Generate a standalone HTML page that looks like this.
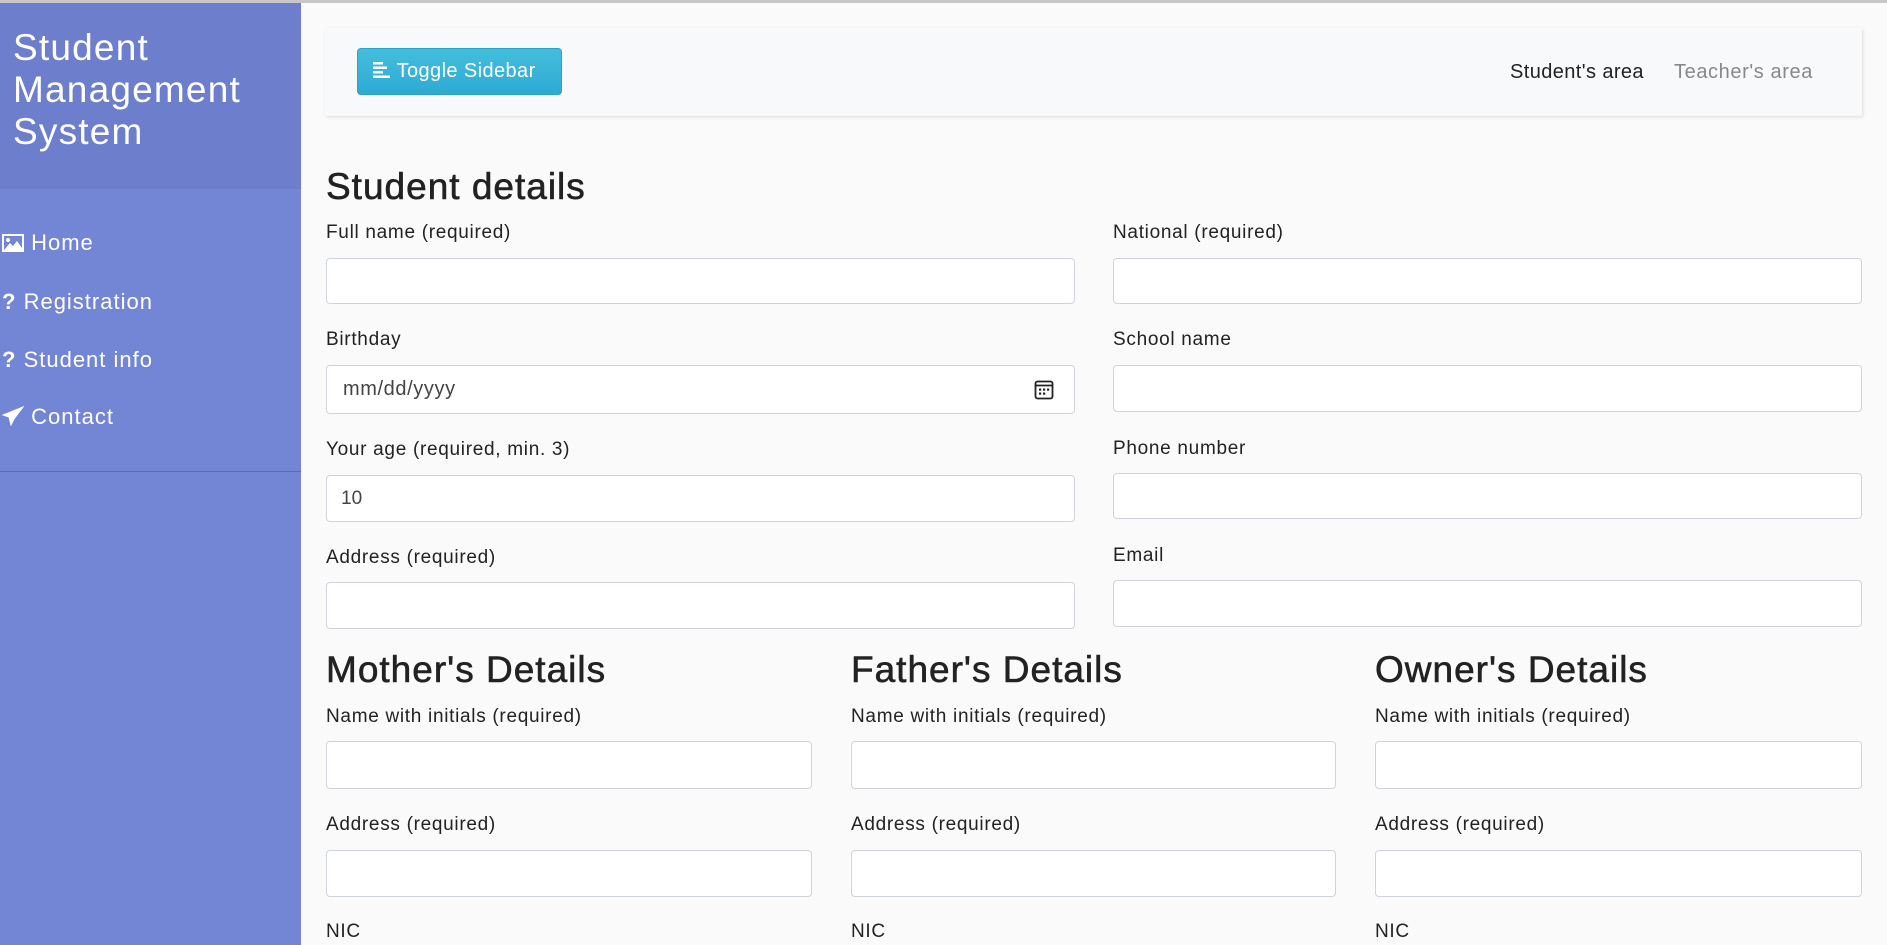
<!DOCTYPE html>
<html><head><meta charset="utf-8"><style>
*{box-sizing:border-box;margin:0;padding:0}
body{width:1887px;height:945px;overflow:hidden;background:#fafafa;font-family:"Liberation Sans",sans-serif;color:#212529;position:relative}
.topline{position:absolute;left:0;top:0;width:1887px;height:3px;background:#c8c8c8}
.side{position:absolute;left:0;top:3px;width:301px;height:942px;background:#7386d5}
.sidehead{position:absolute;left:0;top:3px;width:301px;height:186px;background:#6d7fcc}
.title{position:absolute;left:13px;top:27px;color:#fff;font-size:37px;line-height:42px;letter-spacing:1.2px}
.nav{position:absolute;left:2px;color:#fff;font-size:22px;line-height:28px;white-space:nowrap;letter-spacing:1px}
.divider{position:absolute;left:0;top:471px;width:301px;height:1px;background:#5a6ab0}
.card{position:absolute;left:325px;top:28px;width:1537px;height:88px;background:#f8f9fa;box-shadow:1px 1px 3px rgba(0,0,0,.12)}
.btn{position:absolute;left:357px;top:48px;width:205px;height:47px;border-radius:4px;background:linear-gradient(#45bedc,#2eaad4);border:1px solid #2aa3c7;color:#fff;font-size:20px;line-height:45px;padding-left:15px;letter-spacing:0.4px;white-space:nowrap}
.t{position:absolute;white-space:nowrap}
.h{font-size:37px;line-height:42px;color:#222;letter-spacing:1px;-webkit-text-stroke:0.6px #222}
.l{font-size:19px;line-height:24px;color:#222;letter-spacing:0.7px}
.in{position:absolute;background:#fff;border:1px solid #ced4da;border-radius:4px}
</style></head><body>
<div class="topline"></div>
<div class="side"></div>
<div class="sidehead"></div>
<div class="title">Student<br>Management<br>System</div>
<div class="nav" style="top:229px"><svg width="22" height="18" viewBox="0 0 22 18" style="vertical-align:-2px"><rect x="1" y="1" width="20" height="16" fill="none" stroke="#fff" stroke-width="2"/><circle cx="6" cy="6" r="2" fill="#fff"/><path d="M2 16 L8 9 L11 12 L15 7 L20 14 L20 16Z" fill="#fff"/></svg> Home</div>
<div class="nav" style="top:288px"><b>?</b> Registration</div>
<div class="nav" style="top:346px"><b>?</b> Student info</div>
<div class="nav" style="top:403px"><svg width="22" height="20" viewBox="0 0 22 20" style="vertical-align:-2px"><path d="M21 1 L1 9 L7 11 L9 19 L12 13 Z" fill="#fff" stroke="#fff" stroke-width="1"/></svg> Contact</div>
<div class="divider"></div>

<div class="card"></div>
<div class="btn"><svg width="18" height="18" viewBox="0 0 18 18" style="vertical-align:-2px"><rect x="0" y="1" width="10" height="2.5" fill="#fff"/><rect x="0" y="5.5" width="14" height="2.5" fill="#fff"/><rect x="0" y="10" width="10" height="2.5" fill="#fff"/><rect x="0" y="14.5" width="17" height="2.5" fill="#fff"/></svg> Toggle Sidebar</div>
<div class="t" style="left:1510px;top:60px;font-size:20px;line-height:24px;color:#222;letter-spacing:0.4px">Student's area</div>
<div class="t" style="left:1674px;top:60px;font-size:20px;line-height:24px;color:#888;letter-spacing:0.6px">Teacher's area</div>

<div class="t h" style="left:326px;top:166px">Student details</div>

<div class="t l" style="left:326px;top:221px">Full name (required)</div>
<div class="in" style="left:326px;top:258px;width:749px;height:46px"></div>
<div class="t l" style="left:326px;top:328px">Birthday</div>
<div class="in" style="left:326px;top:365px;width:749px;height:49px"><span style="position:absolute;left:16px;top:12px;font-size:20px;color:#444;letter-spacing:0.6px">mm/dd/yyyy</span><svg style="position:absolute;right:20px;top:14px" width="20" height="20" viewBox="0 0 20 20"><rect x="1.5" y="1.5" width="17" height="17" rx="2" fill="none" stroke="#222" stroke-width="1.8"/><line x1="1.5" y1="5.5" x2="18.5" y2="5.5" stroke="#222" stroke-width="1.8"/><g fill="#222"><rect x="5" y="8.5" width="2.2" height="2.2"/><rect x="9" y="8.5" width="2.2" height="2.2"/><rect x="13" y="8.5" width="2.2" height="2.2"/><rect x="5" y="12.5" width="2.2" height="2.2"/><rect x="9" y="12.5" width="2.2" height="2.2"/></g></svg></div>
<div class="t l" style="left:326px;top:438px">Your age (required, min. 3)</div>
<div class="in" style="left:326px;top:475px;width:749px;height:47px"><span style="position:absolute;left:14px;top:12px;font-size:19px;color:#444">10</span></div>
<div class="t l" style="left:326px;top:546px">Address (required)</div>
<div class="in" style="left:326px;top:582px;width:749px;height:47px"></div>

<div class="t l" style="left:1113px;top:221px">National (required)</div>
<div class="in" style="left:1113px;top:258px;width:749px;height:46px"></div>
<div class="t l" style="left:1113px;top:328px">School name</div>
<div class="in" style="left:1113px;top:365px;width:749px;height:47px"></div>
<div class="t l" style="left:1113px;top:437px">Phone number</div>
<div class="in" style="left:1113px;top:473px;width:749px;height:46px"></div>
<div class="t l" style="left:1113px;top:544px">Email</div>
<div class="in" style="left:1113px;top:580px;width:749px;height:47px"></div>

<div class="t h" style="left:326px;top:649px">Mother's Details</div>
<div class="t h" style="left:851px;top:649px">Father's Details</div>
<div class="t h" style="left:1375px;top:649px">Owner's Details</div>

<div class="t l" style="left:326px;top:705px">Name with initials (required)</div>
<div class="t l" style="left:851px;top:705px">Name with initials (required)</div>
<div class="t l" style="left:1375px;top:705px">Name with initials (required)</div>
<div class="in" style="left:326px;top:741px;width:486px;height:48px"></div>
<div class="in" style="left:851px;top:741px;width:485px;height:48px"></div>
<div class="in" style="left:1375px;top:741px;width:487px;height:48px"></div>

<div class="t l" style="left:326px;top:813px">Address (required)</div>
<div class="t l" style="left:851px;top:813px">Address (required)</div>
<div class="t l" style="left:1375px;top:813px">Address (required)</div>
<div class="in" style="left:326px;top:850px;width:486px;height:47px"></div>
<div class="in" style="left:851px;top:850px;width:485px;height:47px"></div>
<div class="in" style="left:1375px;top:850px;width:487px;height:47px"></div>

<div class="t l" style="left:326px;top:920px">NIC</div>
<div class="t l" style="left:851px;top:920px">NIC</div>
<div class="t l" style="left:1375px;top:920px">NIC</div>
</body></html>
